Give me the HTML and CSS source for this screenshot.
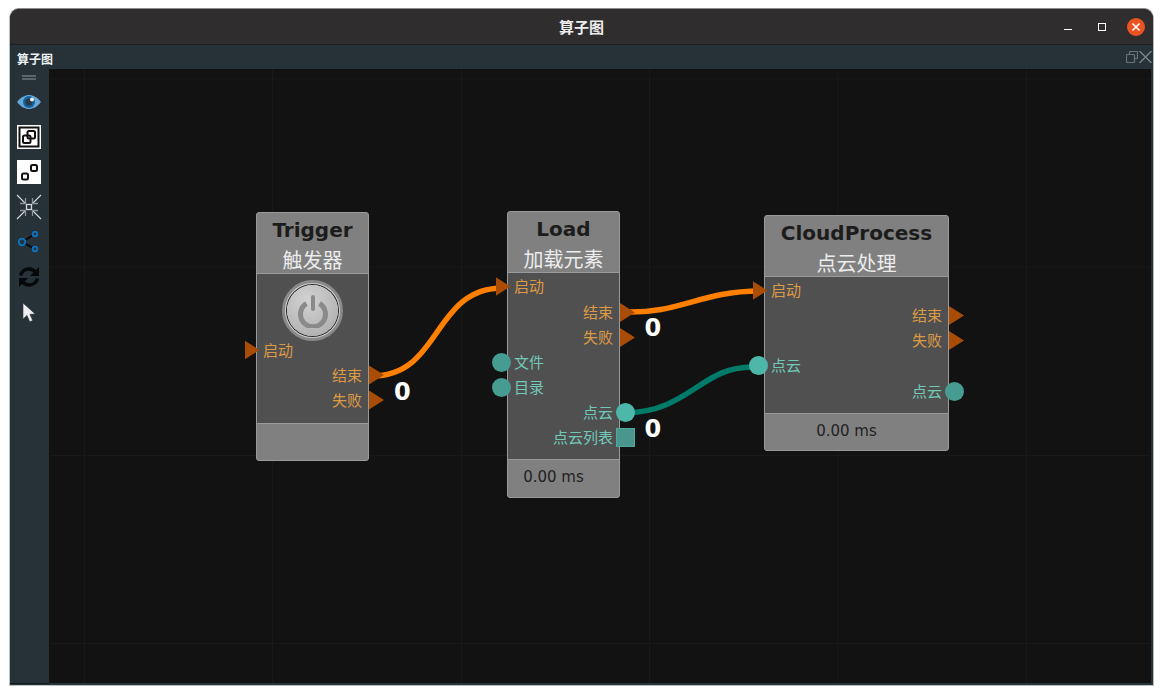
FILE: index.html
```html
<!DOCTYPE html>
<html>
<head lang="zh">
    <meta charset="UTF-8">
    <title>算子图</title>
    <link rel="stylesheet" href="styles.css">
</head>
<body>

<div class="window">
    <div class="titlebar">
        <span class="win-title">算子图</span>
        <div class="win-btns">
            <span class="btn-min"></span>
            <span class="btn-max"></span>
            <span class="btn-close">
                <svg width="18" height="18" viewBox="0 0 18 18"><path d="M5.500 5.500l7 7M12.500 5.500l-7 7" stroke="#fff" stroke-width="1.600" fill="none"/></svg>
            </span>
        </div>
    </div>

    <div class="panel-head">
        <span class="panel-title">算子图</span>
        <div class="panel-btns">
            <svg width="12" height="12" viewBox="0 0 12 12"><path d="M3.500 3.500V1.500q0-1 1-1h6q1 0 1 1v5q0 1-1 1H8.500M1.500 3.500h6q1 0 1 1v6q0 1-1 1h-6q-1 0-1-1v-6q0-1 1-1z" stroke="#67757b" stroke-width="1.200" fill="none"/></svg>
            <svg width="13" height="12" viewBox="0 0 13 12"><path d="M.5 0l12 12M12.500 0l-12 12" stroke="#7a878d" stroke-width="1.300" fill="none"/></svg>
        </div>
    </div>

    <div class="panel-main">
        <div class="toolbar">
            <div class="grip"></div>
            <div class="tool">
                <svg width="24" height="16" viewBox="0 0 24 16">
                    <path d="M0 8C4 3 8 1 12 1s8 2 12 7c-4 5-8 7-12 7S4 13 0 8z" fill="#67a6d6"/>
                    <circle cx="12" cy="8" r="6" fill="#12639f"/>
                    <circle cx="12" cy="8" r="3.600" fill="#2b3a44"/>
                    <circle cx="15" cy="5.500" r="2" fill="#e8eef2"/>
                </svg>
            </div>
            <div class="tool">
                <svg width="24" height="24" viewBox="0 0 24 24">
                    <rect width="24" height="24" fill="#fff"/>
                    <rect x="2.500" y="2.500" width="19" height="19" fill="none" stroke="#111" stroke-width="2"/>
                    <rect x="6" y="10.500" width="7.500" height="7.500" rx="1.500" fill="none" stroke="#111" stroke-width="2"/>
                    <rect x="10.500" y="6" width="7.500" height="7.500" rx="1.500" fill="none" stroke="#111" stroke-width="2"/>
                </svg>
            </div>
            <div class="tool">
                <svg width="24" height="24" viewBox="0 0 24 24">
                    <rect width="24" height="24" fill="#fff"/>
                    <rect x="5" y="13.500" width="6" height="6" rx="1.500" fill="none" stroke="#111" stroke-width="2"/>
                    <rect x="14" y="5" width="6" height="6" rx="1.500" fill="none" stroke="#111" stroke-width="2"/>
                </svg>
            </div>
            <div class="tool">
                <svg width="26" height="26" viewBox="0 0 26 26" fill="none" stroke="#d5d9db" stroke-width="1.100">
                    <rect x="10.500" y="10.500" width="5" height="5" stroke-width="1.300"/>
                    <path d="M1 1l8.500 8.500M25 1l-8.500 8.500M1 25l8.500-8.500M25 25l-8.500-8.500"/>
                    <path d="M4 9.500h5.500V4M22 9.500h-5.500V4M4 16.500h5.500V22M22 16.500h-5.500V22" stroke="#8d9599" stroke-width="1.300"/>
                </svg>
            </div>
            <div class="tool">
                <svg width="22" height="22" viewBox="0 0 22 22" fill="none" stroke="#0b74c4" stroke-width="1.800">
                    <path d="M4 11l13-8M4 11l13 7" stroke="#05090b" stroke-width="1.800"/>
                    <circle cx="4" cy="11" r="3.300" fill="#27343c"/>
                    <circle cx="17" cy="3" r="2.300" fill="#27343c"/>
                    <circle cx="17" cy="18" r="2.300" fill="#27343c"/>
                </svg>
            </div>
            <div class="tool">
                <svg width="22" height="22" viewBox="0 0 22 22" fill="none" stroke="#050708" stroke-width="3.400">
                    <path d="M2.500 9.500C3.500 5.500 7 3 11 3c3 0 5 1.300 7 3.500"/>
                    <path d="M19.500 12.500C18.500 16.500 15 19 11 19c-3 0-5-1.300-7-3.500"/>
                    <path d="M21 1v9h-9zM1 21v-9h9z" fill="#050708" stroke="none"/>
                </svg>
            </div>
            <div class="tool">
                <svg width="14" height="21" viewBox="0 0 14 21">
                    <path d="M1 1v16l4-3.600 2.800 6.400 2.900-1.300-2.800-6.200 5.300-.4z" fill="#eef0f1" stroke="#333" stroke-width=".6"/>
                </svg>
            </div>
        </div>

        <div class="canvas">
            <svg class="wires" width="1103" height="614" viewBox="49 69 1103 614">
                <g stroke="#191919" stroke-width="1">
                    <path d="M84.500 69V683M272.500 69V683M461.500 69V683M649.500 69V683M838 69V683M1026.500 69V683"/>
                    <path d="M51 79H1150M51 267H1150M51 455.500H1150M51 643.500H1150"/>
                </g>
                <g fill="none" stroke-width="5.500">
                    <path d="M372 376C442 376 432 288 503 288" stroke="#ff7f00"/>
                    <path d="M624 312C680 314 700 291 760 291" stroke="#ff7f00"/>
                    <path d="M624 413C690 412 700 367 752 367" stroke="#007a69"/>
                </g>
                <g fill="#fff" font-family="'DejaVu Sans', sans-serif" font-weight="700" font-size="24">
                    <text x="394" y="400">0</text>
                    <text x="644.500" y="336">0</text>
                    <text x="644.500" y="437">0</text>
                </g>
            </svg>

            <div class="node node-trigger">
                <div class="node-name">Trigger</div>
                <div class="node-sub">触发器</div>
                <div class="node-body">
                    <div class="power">
                        <div class="power-face">
                            <svg width="32" height="34" viewBox="0 0 32 34" fill="none" stroke="#8a8a8a" stroke-width="5">
                                <path d="M9.500 9.500a12.500 12.500 0 1 0 13 0"/>
                                <path d="M16 3v12" stroke-linecap="round" stroke-width="4"/>
                            </svg>
                        </div>
                    </div>
                    <div class="row row-in"><i class="tri tri-in"></i>启动</div>
                    <div class="row row-out">结束<i class="tri tri-out"></i></div>
                    <div class="row row-out">失败<i class="tri tri-out"></i></div>
                </div>
                <div class="node-foot"></div>
            </div>

            <div class="node node-load">
                <div class="node-name">Load</div>
                <div class="node-sub">加载元素</div>
                <div class="node-body">
                    <div class="row row-in"><i class="tri tri-in"></i>启动</div>
                    <div class="row row-out">结束<i class="tri tri-out"></i></div>
                    <div class="row row-out">失败<i class="tri tri-out"></i></div>
                    <div class="row row-in teal"><i class="dot dot-in"></i>文件</div>
                    <div class="row row-in teal"><i class="dot dot-in"></i>目录</div>
                    <div class="row row-out teal">点云<i class="dot dot-out lit"></i></div>
                    <div class="row row-out teal">点云列表<i class="sq"></i></div>
                </div>
                <div class="node-foot">0.00 ms</div>
            </div>

            <div class="node node-cloud">
                <div class="node-name">CloudProcess</div>
                <div class="node-sub">点云处理</div>
                <div class="node-body">
                    <div class="row row-in"><i class="tri tri-in"></i>启动</div>
                    <div class="row row-out">结束<i class="tri tri-out"></i></div>
                    <div class="row row-out">失败<i class="tri tri-out"></i></div>
                    <div class="row row-in teal"><i class="dot dot-in lit"></i>点云</div>
                    <div class="row row-out teal">点云<i class="dot dot-out"></i></div>
                </div>
                <div class="node-foot">0.00 ms</div>
            </div>
        </div>
    </div>
</div>

</body>
</html>
```

FILE: styles.css
```css
* {
    padding: 0;
    margin: 0;
    box-sizing: border-box;
}
body {
    background: #fff;
    font-family: "Noto Sans CJK SC", "DejaVu Sans", sans-serif;
}
.window {
    width: 1145px;
    height: 678px;
    margin: 8px 0 0 9px;
    border: 1px solid #b9bfc1;
    border-top-color: #8c8c8c;
    border-radius: 10px 10px 0 0;
    background: #263238;
    display: flex;
    flex-direction: column;
    overflow: hidden;
}

/* title bar */
.titlebar {
    height: 36px;
    flex: none;
    background: #2f2d2d;
    border-bottom: 1px solid #1f1f1f;
    display: flex;
    align-items: center;
    justify-content: center;
    position: relative;
}
.win-title {
    color: #ececec;
    font-size: 15px;
    font-weight: 700;
}
.win-btns {
    position: absolute;
    right: 8px;
    top: 9px;
    display: flex;
    align-items: center;
}
.btn-min {
    width: 8px;
    height: 1px;
    background: #fff;
    margin-top: 4px;
}
.btn-max {
    width: 8px;
    height: 8px;
    border: 1px solid #fff;
    margin-left: 26px;
}
.btn-close {
    width: 18px;
    height: 18px;
    border-radius: 50%;
    background: #e95420;
    margin-left: 21px;
}
.btn-close svg {
    display: block;
}

/* dock header */
.panel-head {
    height: 24px;
    flex: none;
    display: flex;
    align-items: center;
    justify-content: space-between;
    padding: 2px 1px 0 7px;
}
.panel-title {
    color: #eef1f2;
    font-size: 12px;
    font-weight: 700;
}
.panel-btns {
    display: flex;
    gap: 1px;
    margin-top: -2px;
}

.panel-main {
    flex: 1;
    display: flex;
    padding: 0 2px 2px 0;
}

/* left toolbar */
.toolbar {
    width: 39px;
    padding-right: 1px;
    flex: none;
    display: flex;
    flex-direction: column;
    align-items: center;
    margin-bottom: -1px;
    border-bottom: 1px solid #10181c;
}
.grip {
    width: 14px;
    height: 5px;
    margin: 6px 0 4.500px;
    border-top: 2px solid #59656a;
    border-bottom: 2px solid #59656a;
    flex: none;
}
.tool {
    height: 35px;
    flex: none;
    display: flex;
    align-items: center;
    justify-content: center;
}

/* graph area */
.canvas {
    flex: 1;
    background: #121212;
    position: relative;
}
.wires {
    position: absolute;
    left: 0;
    top: 0;
}
.node {
    position: absolute;
    background: #808080;
    border: 1px solid #9a9a9a;
    border-radius: 3px;
    display: flex;
    flex-direction: column;
    align-items: stretch;
}
.node-trigger {
    left: 207px;
    top: 143px;
    width: 113px;
    height: 249px;
}
.node-load {
    left: 458px;
    top: 142px;
    width: 113px;
    height: 287px;
}
.node-cloud {
    left: 715px;
    top: 146px;
    width: 185px;
    height: 236px;
}
.node-name {
    height: 33px;
    text-align: center;
    font: 700 20px/33px "DejaVu Sans", sans-serif;
    color: #1c1c1c;
    margin-top: 1px;
}
.node-sub {
    height: 26px;
    text-align: center;
    font-size: 20px;
    line-height: 26px;
    color: #ececec;
}
.node-body {
    background: #505050;
    border-top: 1px solid #9a9a9a;
    border-bottom: 1px solid #9a9a9a;
    flex: 1;
}
.node-foot {
    flex: none;
    height: 36px;
    text-align: center;
    font: 15px/34px "DejaVu Sans", sans-serif;
    color: #222;
}
.node-load .node-foot {
    height: 37px;
    padding-right: 20px;
}
.node-cloud .node-foot {
    padding-right: 20px;
}

.power {
    width: 61px;
    height: 61px;
    margin: 6px auto -4.500px;
    border-radius: 50%;
    background: #d0d0d0;
    border: 3px solid #8a8a8a;
    padding: 2px;
}
.power-face {
    width: 51px;
    height: 51px;
    border-radius: 50%;
    background: radial-gradient(circle at 40% 30%, #d2d2d2, #a9a9a9);
    box-shadow: 0 0 0 1px #222;
    display: flex;
    align-items: center;
    justify-content: center;
}

/* port rows */
.row {
    height: 25px;
    line-height: 25px;
    font-size: 15px;
    color: #dd9a45;
    position: relative;
}
.node-load .row:first-child {
    height: 26px;
}
.node-cloud .row:last-child {
    margin-top: 1px;
}
.teal {
    color: #71c9b8;
}
.row-in {
    padding-left: 6px;
}
.row-out {
    text-align: right;
    padding-right: 6px;
}
.tri {
    position: absolute;
    top: 4px;
    width: 15px;
    height: 19px;
    background: #a94d06;
    clip-path: polygon(0 0, 100% 50%, 0 100%);
}
.tri-in {
    left: -12.500px;
}
.tri-out {
    right: -16px;
}
.dot {
    position: absolute;
    top: 4px;
    width: 19px;
    height: 19px;
    border-radius: 50%;
    background: #469c91;
}
.dot.lit {
    background: #4db8aa;
}
.dot-in {
    left: -16px;
}
.dot-out {
    right: -16px;
}
.sq {
    position: absolute;
    top: 4px;
    right: -16px;
    width: 19px;
    height: 19px;
    background: #4a968c;
    border: 1px solid #4fa89c;
}
```
